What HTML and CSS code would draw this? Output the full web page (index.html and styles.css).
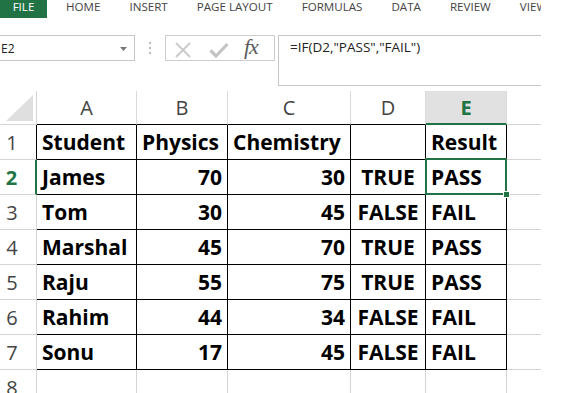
FILE: index.html
```html
<!DOCTYPE HTML>
<html>

<head>
  <meta charset="utf-8">
  <link rel="stylesheet" href="styles.css">
</head>

<body>

  <div class="app">

    <!-- Ribbon tabs -->
    <div class="tabs">
      <span class="tab file">FILE</span>
      <span class="tab first">HOME</span>
      <span class="tab">INSERT</span>
      <span class="tab">PAGE LAYOUT</span>
      <span class="tab">FORMULAS</span>
      <span class="tab">DATA</span>
      <span class="tab">REVIEW</span>
      <span class="tab">VIEW</span>
    </div>

    <!-- Formula bar -->
    <div class="fbar">
      <div class="namebox">
        <span>E2</span>
        <svg class="dd" width="7" height="4" viewBox="0 0 7 4"><path d="M0 0H7L3.5 4Z" fill="#777"/></svg>
      </div>
      <div class="grip"><i></i><i></i><i></i></div>
      <div class="fxbox">
        <svg class="cancel" width="18" height="16" viewBox="0 0 18 16">
          <path d="M2 1L16 15M16 1L2 15" stroke="#c9c9c9" stroke-width="1.8" fill="none"/>
        </svg>
        <svg class="enter" width="20" height="16" viewBox="0 0 20 16">
          <path d="M1.5 8.5L7 14L18.5 2" stroke="#c4c4c4" stroke-width="3.2" fill="none"/>
        </svg>
        <span class="fx">fx</span>
      </div>
      <div class="formula">=IF(D2,"PASS","FAIL")</div>
    </div>

    <!-- Sheet -->
    <div class="sheet">
      <div class="corner"><svg width="27" height="26" viewBox="0 0 27 26"><path d="M27 0V26H0Z" fill="#dfdfdf"/></svg></div>
      <div class="hd tb">A</div>
      <div class="hd tb">B</div>
      <div class="hd tb">C</div>
      <div class="hd tb">D</div>
      <div class="hd tb on">E</div>
      <div class="hd last"></div>

      <div class="rh tr">1</div>
      <div class="c b">Student</div>
      <div class="c b">Physics</div>
      <div class="c b">Chemistry</div>
      <div class="c b"></div>
      <div class="c b">Result</div>
      <div class="c last"></div>

      <div class="rh on">2</div>
      <div class="c b">James</div>
      <div class="c b num">70</div>
      <div class="c b num">30</div>
      <div class="c b bool">TRUE</div>
      <div class="c b">PASS</div>
      <div class="c last"></div>

      <div class="rh">3</div>
      <div class="c b">Tom</div>
      <div class="c b num">30</div>
      <div class="c b num">45</div>
      <div class="c b bool">FALSE</div>
      <div class="c b">FAIL</div>
      <div class="c last"></div>

      <div class="rh">4</div>
      <div class="c b">Marshal</div>
      <div class="c b num">45</div>
      <div class="c b num">70</div>
      <div class="c b bool">TRUE</div>
      <div class="c b">PASS</div>
      <div class="c last"></div>

      <div class="rh">5</div>
      <div class="c b">Raju</div>
      <div class="c b num">55</div>
      <div class="c b num">75</div>
      <div class="c b bool">TRUE</div>
      <div class="c b">PASS</div>
      <div class="c last"></div>

      <div class="rh">6</div>
      <div class="c b">Rahim</div>
      <div class="c b num">44</div>
      <div class="c b num">34</div>
      <div class="c b bool">FALSE</div>
      <div class="c b">FAIL</div>
      <div class="c last"></div>

      <div class="rh">7</div>
      <div class="c b">Sonu</div>
      <div class="c b num">17</div>
      <div class="c b num">45</div>
      <div class="c b bool">FALSE</div>
      <div class="c b">FAIL</div>
      <div class="c last"></div>

      <div class="rh">8</div>
      <div class="c"></div>
      <div class="c"></div>
      <div class="c"></div>
      <div class="c"></div>
      <div class="c"></div>
      <div class="c last"></div>

      <!-- active cell E2 -->
      <div class="selection"><i class="handle"></i></div>
    </div>

  </div>

</body>
</html>
```

FILE: styles.css
```css
body {
  margin: 0;
  background: #fff;
  font-family: "Open Sans", "Noto Sans", sans-serif;
}

.app {
  width: 541px;
  height: 393px;
  overflow: hidden;
}

/* ribbon tabs */
.tabs {
  display: flex;
  gap: 29px;
  height: 18px;
  white-space: nowrap;
}
.tab {
  flex-shrink: 0;
  font-size: 11.6px;
  line-height: 13px;
  color: #444;
}
.tab.file {
  width: 47px;
  height: 18px;
  background: #217346;
  color: #fff;
  text-align: center;
}
.tab.first {
  margin-left: -10px;
}

/* formula bar */
.fbar {
  display: flex;
  align-items: flex-start;
  margin-top: 17px;
  height: 51px;
}
.namebox {
  box-sizing: border-box;
  width: 135px;
  height: 26px;
  border: 1px solid #c6c6c6;
  border-left: none;
  display: flex;
  align-items: center;
  justify-content: space-between;
  padding: 1px 7px 0 1px;
  font-size: 12px;
  color: #222;
}
.grip {
  display: flex;
  flex-direction: column;
  gap: 3px;
  margin: 7px 14px 0 14px;
}
.grip i {
  width: 2px;
  height: 2px;
  background: #bdbdbd;
}
.fxbox {
  box-sizing: border-box;
  width: 110px;
  height: 26px;
  border: 1px solid #cdcdcd;
  display: flex;
  align-items: center;
}
.cancel {
  margin-left: 8px;
  margin-top: 4px;
}
.enter {
  margin-left: 17px;
  margin-top: 4px;
}
.fx {
  margin-left: 15px;
  margin-top: -2px;
  font-family: "Liberation Serif", serif;
  font-style: italic;
  font-size: 22px;
  line-height: 20px;
  color: #5a5a5a;
  letter-spacing: -1px;
}
.formula {
  box-sizing: border-box;
  flex: 1;
  height: 51px;
  margin-left: 3px;
  border: 1px solid #c6c6c6;
  border-right: none;
  padding: 3px 0 0 11px;
  font-size: 13.5px;
  line-height: 17px;
  color: #222;
  white-space: nowrap;
}

/* sheet grid */
.sheet {
  position: relative;
  margin-top: 5px;
  display: grid;
  grid-template-columns: 37px 100px 91px 123px 75px 81px 34px;
  grid-template-rows: 34px repeat(7, 35px) 24px;
}
.sheet > div {
  box-sizing: border-box;
  border-right: 1px solid #d4d4d4;
  border-bottom: 1px solid #d4d4d4;
}
.sheet > .last {
  border-right: none;
}

.corner {
  display: flex;
  align-items: flex-end;
  padding: 0 3px 3px 6px;
}
.corner svg {
  display: block;
}

.hd {
  font-size: 20px;
  color: #444;
  text-align: center;
  padding-top: 3px;
  line-height: 28px;
}
.sheet > .hd {
  border-right-color: #dadada;
}
.sheet > .tb {
  border-bottom-color: #000;
}
.sheet > .hd.on {
  background: #e1e1e1;
  border-bottom: 2px solid #217346;
  color: #217346;
  font-weight: 700;
}

.rh {
  font-size: 20px;
  color: #444;
  line-height: 34px;
  padding: 1px 12px 0 0;
  text-align: center;
}
.sheet > .tr {
  border-right-color: #000;
}
.sheet > .rh.on {
  border-right: 2px solid #217346;
  color: #217346;
  font-weight: 700;
}

.c {
  font-size: 21px;
  font-weight: 700;
  color: #000;
  line-height: 34px;
  padding: 0 5px;
  white-space: nowrap;
  overflow: hidden;
}
.sheet > .b {
  border-right-color: #000;
  border-bottom-color: #000;
}
.c.num {
  text-align: right;
}
.c.bool {
  text-align: center;
  padding: 0;
}

.sheet > .selection {
  position: absolute;
  left: 425px;
  top: 67px;
  width: 82px;
  height: 37px;
  border: 2px solid #217346;
}
.handle {
  position: absolute;
  right: -5px;
  bottom: -5px;
  width: 5px;
  height: 5px;
  background: #217346;
  border: 1px solid #fff;
}
```
